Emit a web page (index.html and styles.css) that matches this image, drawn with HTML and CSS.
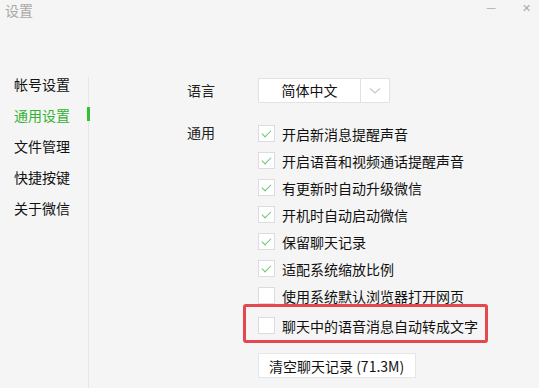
FILE: index.html
```html
<!DOCTYPE html>
<html>
<head>
  <meta charset="UTF-8">
  <title>设置</title>
  <link rel="stylesheet" href="styles.css">
</head>
<body>
  <div class="titlebar">
    <span class="title">设置</span>
    <span class="win-btn min">&#8212;</span>
    <span class="win-btn close">&#10005;</span>
  </div>
  <div class="main">
    <ul class="nav">
      <li>帐号设置</li>
      <li class="active">通用设置</li>
      <li>文件管理</li>
      <li>快捷按键</li>
      <li>关于微信</li>
    </ul>
    <div class="divider"></div>
    <div class="content">
      <div class="row lang-row">
        <div class="label">语言</div>
        <div class="select">
          <span class="select-value">简体中文</span>
          <span class="select-arrow">
            <svg width="12" height="8" viewBox="0 0 12 8"><polyline points="1,1.5 6,6 11,1.5" fill="none" stroke="#c8c8c8" stroke-width="1.2"/></svg>
          </span>
        </div>
      </div>
      <div class="row">
        <div class="label label-top">通用</div>
        <div class="options">
          <div class="option"><span class="box checked"></span>开启新消息提醒声音</div>
          <div class="option"><span class="box checked"></span>开启语音和视频通话提醒声音</div>
          <div class="option"><span class="box checked"></span>有更新时自动升级微信</div>
          <div class="option"><span class="box checked"></span>开机时自动启动微信</div>
          <div class="option"><span class="box checked"></span>保留聊天记录</div>
          <div class="option"><span class="box checked"></span>适配系统缩放比例</div>
          <div class="option"><span class="box"></span>使用系统默认浏览器打开网页</div>
          <div class="highlight">
            <div class="option"><span class="box"></span>聊天中的语音消息自动转成文字</div>
          </div>
          <button class="clear-btn">清空聊天记录 (71.3M)</button>
        </div>
      </div>
    </div>
  </div>
</body>
</html>
```

FILE: styles.css
```css
body {
  margin: 0;
  padding: 0;
  background: #f5f5f5;
  font-family: "Noto Sans CJK SC", "Microsoft YaHei", sans-serif;
  font-size: 14px;
  color: #111;
  width: 539px;
  height: 388px;
  overflow: hidden;
}
.titlebar {
  display: flex;
  align-items: center;
  height: 20px;
  padding: 0 8px 0 5px;
  color: #a8a8a8;
}
.title {
  flex: 1;
  line-height: 20px;
}
.win-btn {
  color: #aaa;
  font-size: 11px;
  line-height: 14px;
  margin-top: -6px;
}
.min {
  margin-right: 26px;
}
.main {
  display: flex;
  margin-top: 49px;
}
.nav {
  list-style: none;
  margin: 0;
  padding: 0 0 0 14px;
  width: 74px;
}
.nav li {
  position: relative;
  line-height: 31px;
  color: #111;
}
.nav li.active {
  color: #34b234;
}
.nav li.active::after {
  content: "";
  position: absolute;
  right: -2px;
  top: 7px;
  width: 3px;
  height: 14px;
  background: #2fc12f;
}
.divider {
  width: 1px;
  margin-top: 8px;
  height: 320px;
  background: #e6e6e6;
}
.content {
  padding: 9px 0 0 98px;
}
.row {
  display: flex;
}
.label {
  width: 71px;
  color: #222;
  line-height: 25px;
}
.label-top {
  line-height: 27px;
  margin-top: -1px;
}
.lang-row {
  margin-bottom: 17px;
}
.select {
  display: flex;
  width: 130px;
  height: 23px;
  border: 1px solid #e2e2e2;
  background: #fff;
}
.select-value {
  width: 101px;
  border-right: 1px solid #e2e2e2;
  text-align: center;
  line-height: 23px;
}
.select-arrow {
  flex: 1;
  display: flex;
  align-items: center;
  justify-content: center;
}
.option {
  display: flex;
  align-items: center;
  height: 27px;
  white-space: nowrap;
}
.box {
  width: 15px;
  height: 15px;
  border: 1px solid #dcdcdc;
  background: #fff;
  margin-right: 7px;
  display: flex;
  align-items: center;
  justify-content: center;
}
.box.checked::after {
  content: "";
  width: 8px;
  height: 4px;
  border-left: 1px solid #6cc36f;
  border-bottom: 1px solid #6cc36f;
  transform: rotate(-45deg);
  margin-top: -3px;
}
.highlight {
  box-sizing: border-box;
  width: 245px;
  margin: -5px 0 0 -15px;
  padding: 5px 0 1px 12px;
  border: 3px solid #e5474e;
  border-radius: 3px;
}
.clear-btn {
  margin-top: 10px;
  height: 25px;
  width: 158px;
  padding: 0 10px;
  text-align: left;
  border: 1px solid #e6e6e6;
  background: #fff;
  font-family: inherit;
  font-size: 14px;
  color: #111;
}
```
